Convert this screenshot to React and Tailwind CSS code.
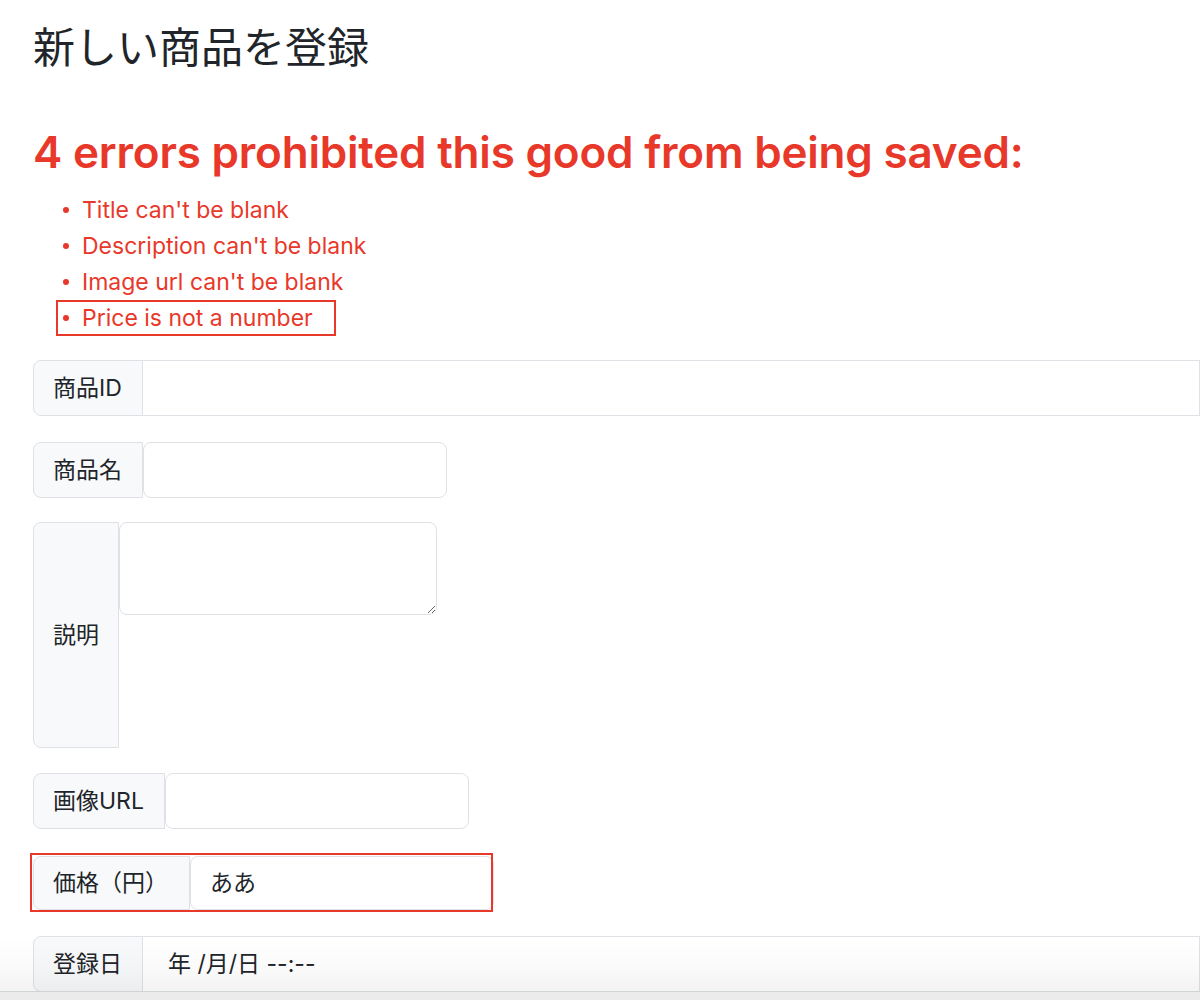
const font = { fontFamily: 'Inter, "Noto Sans CJK JP", sans-serif' };

const errors = [
  "Title can't be blank",
  "Description can't be blank",
  "Image url can't be blank",
  'Price is not a number',
];

const Label = ({ children, className = '' }) => (
  <span className={`flex items-center px-[19px] bg-[#f8f9fa] border border-[#dfe1e6] rounded-l-[8px] text-[23px] text-[#212529] whitespace-nowrap ${className}`}>
    {children}
  </span>
);

const App = () => {
  return (
    <div className="min-h-[1000px] bg-white pl-[33px] pt-[21px] relative overflow-hidden" style={font}>
      <h1 className="text-[42px] leading-[54px] font-normal text-[#212529]">新しい商品を登録</h1>

      <h2 className="mt-[50px] text-[44px] leading-[54px] font-semibold text-[#e8382a] tracking-[-0.2px]">
        4 errors prohibited this good from being saved:
      </h2>
      <ul className="mt-[13px] text-[23px] leading-[36px] text-[#e8382a]">
        {errors.map((e, i) => (
          <li key={e} className={`flex items-center ${i === 3 ? 'ml-[23px] w-[280px] border-2 border-[#e8382a] pl-[5px] h-[36px]' : 'pl-[30px]'}`}>
            <span className="w-[6px] h-[6px] rounded-full bg-[#e8382a] mr-[13px]" />
            <span>{e}</span>
          </li>
        ))}
      </ul>

      <div className="mt-[24px] flex flex-col">
        <div className="flex h-[56px]">
          <Label className="w-[110px]">商品ID</Label>
          <input readOnly className="flex-1 border border-l-0 border-[#dfe1e6] outline-none" />
        </div>

        <div className="mt-[26px] flex h-[56px]">
          <Label className="w-[110px]">商品名</Label>
          <input readOnly className="w-[304px] border border-[#dfe1e6] rounded-[8px] outline-none" />
        </div>

        <div className="mt-[24px] flex h-[226px]">
          <Label className="w-[86px]">説明</Label>
          <textarea readOnly className="w-[318px] h-[93px] border border-[#dfe1e6] rounded-[8px] outline-none resize" />
        </div>

        <div className="mt-[25px] flex h-[56px]">
          <Label className="w-[132px]">画像URL</Label>
          <input readOnly className="w-[304px] border border-[#dfe1e6] rounded-[8px] outline-none" />
        </div>

        <div className="mt-[27px] relative flex h-[54px] w-[461px]">
          <Label className="w-[158px]">価格（円）</Label>
          <input
            readOnly
            value="ああ"
            className="w-[304px] border border-[#dfe1e6] rounded-[8px] outline-none pl-[19px] text-[23px] text-[#212529]"
          />
          <div className="absolute left-[-3px] top-[-3px] w-[463px] h-[59px] border-2 border-[#e8382a] pointer-events-none" />
        </div>

        <div className="mt-[26px] flex h-[56px]">
          <Label className="w-[110px] rounded-bl-[8px]">登録日</Label>
          <div className="flex-1 flex items-center border border-l-0 border-[#dfe1e6] pl-[25px] text-[23px] text-[#212529]">
            年 /月/日 --:--
          </div>
        </div>
      </div>

      {/* screenshot bottom shadow */}
      <div className="absolute left-0 right-0 bottom-0 h-[62px] bg-gradient-to-b from-transparent via-black/[0.02] to-black/[0.06] pointer-events-none" />
      <div className="absolute left-0 right-0 bottom-0 h-[9px] bg-[#ebebeb] border-t border-[#cfd5d3] pointer-events-none" />
    </div>
  );
};

export default App;
